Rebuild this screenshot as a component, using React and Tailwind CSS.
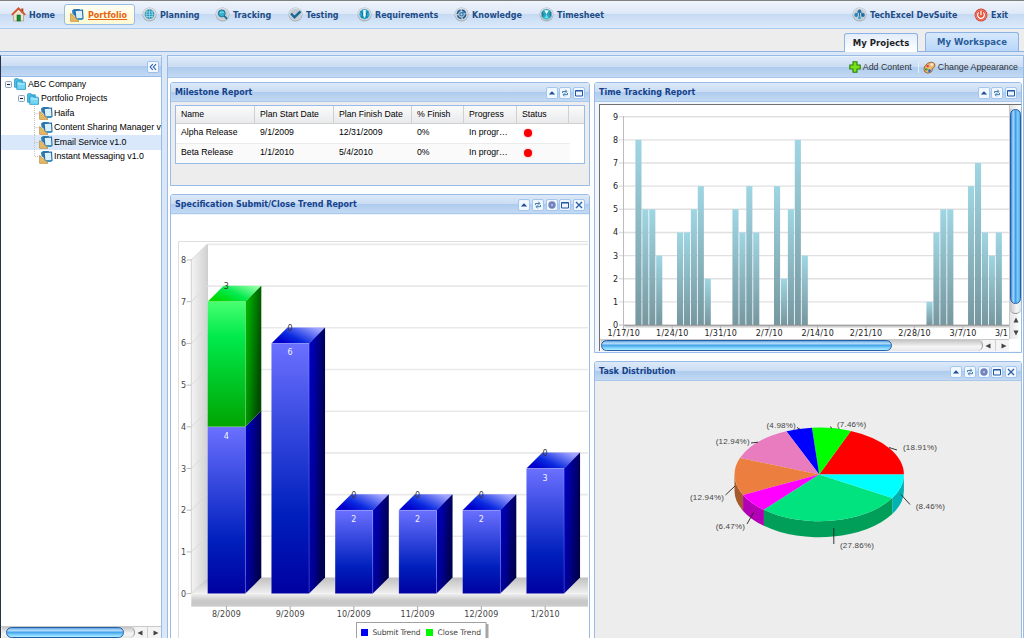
import React from 'react';

const BAR = 'bg-[linear-gradient(to_bottom,#dce9f8_0%,#cbddf3_48%,#adcbee_50%,#c3d9f3_100%)]';

/* ---------- icons ---------- */
function Orb({ children }) {
  return (
    <svg viewBox="0 0 15 15" className="h-[15px] w-[15px] shrink-0">
      <circle cx="7.5" cy="7.5" r="7" fill="#a7afb8" />
      <circle cx="7.5" cy="7" r="6.3" fill="#dfe3e8" />
      <circle cx="7.5" cy="7.3" r="5.5" fill="#c3ccd5" />
      {children}
    </svg>
  );
}

function HomeIcon() {
  return (
    <svg viewBox="0 0 15 15" className="h-[15px] w-[15px] shrink-0">
      <path d="M2.5 7L7.5 2L12.500 7V14H2.500Z" fill="#efe3cf" stroke="#9a8f7a" strokeWidth=".6" />
      <rect x="10.300" y="1.500" width="2" height="4" fill="#a33a22" />
      <path d="M.8 7.800L7.500 1.300L14.200 7.800" fill="none" stroke="#d4542a" strokeWidth="1.800" />
      <rect x="6" y="8" width="3.400" height="6" fill="#118a2c" stroke="#0a5e1d" strokeWidth=".5" />
    </svg>
  );
}

function ProjectIcon() {
  return (
    <svg viewBox="0 0 14 14" className="h-[14px] w-[14px] shrink-0">
      <path d="M2 2.500L4 1H10L9 4L5 8L2.500 6Z" fill="#2d7fb4" />
      <path d="M5 2.500L12.500 2L13 10.500L6 11Z" fill="#d9f1fc" stroke="#2467a0" strokeWidth="1.100" />
      <path d="M7 11L13 10.500L12.500 12H8Z" fill="#2f9ccc" />
      <path d="M.7 5.500L9 13.300H.7Z" fill="#eec26b" stroke="#b98530" strokeWidth=".8" />
      <path d="M2.500 9.500L4.600 11.500H2.500Z" fill="#fff3d2" stroke="#b98530" strokeWidth=".4" />
    </svg>
  );
}

function FolderIcon() {
  return (
    <svg viewBox="0 0 13 13" className="h-[12px] w-[12px] shrink-0">
      <path d="M.6 1.500Q.6.700 1.500.700H4.500L5.500 2H9V10H.6Z" fill="#54bfe4" stroke="#1b8fbd" strokeWidth=".8" />
      <path d="M3 4.200Q3 3.300 4 3.300H6.500L7.500 4.500H11.500Q12.400 4.500 12.400 5.400V12.300H3Z" fill="#76d6f3" stroke="#1b94c4" strokeWidth=".9" />
      <path d="M4 6.500H11.500" stroke="#c9f2fd" />
    </svg>
  );
}

function PlanningIcon() {
  return (
    <Orb>
      <circle cx="7.5" cy="7.3" r="4.700" fill="#1f93b5" />
      <path d="M3 7.300H12M7.500 3V11.600M5.200 3.600Q4 7.300 5.200 11M9.800 3.600Q11 7.300 9.800 11M4 5H11M4 9.500H11" fill="none" stroke="#bcebf5" strokeWidth=".6" />
    </Orb>
  );
}
function TrackingIcon() {
  return (
    <Orb>
      <circle cx="6.800" cy="6.400" r="3.400" fill="#35b3d1" stroke="#13789c" strokeWidth="1" />
      <path d="M9.300 9L12 11.800" stroke="#13688c" strokeWidth="1.800" />
      <path d="M5 6Q6.500 4 8.500 5.500" stroke="#b9ecf6" fill="none" strokeWidth=".8" />
    </Orb>
  );
}
function TestingIcon() {
  return (
    <Orb>
      <path d="M3 6.500L6.500 10.200L12.500 4.300" fill="none" stroke="#176a93" strokeWidth="2.400" />
    </Orb>
  );
}
function RequirementsIcon() {
  return (
    <Orb>
      <circle cx="7.500" cy="7.300" r="5" fill="#27a5cc" />
      <path d="M3.500 4.500Q7.500 6 4.700 10.800M11.500 4.500Q7.500 6 10.300 10.800" fill="none" stroke="#0e6a96" strokeWidth="1" />
      <path d="M6.300 3H8.700V8.500L7.500 11L6.300 8.500Z" fill="#f2fbfd" />
    </Orb>
  );
}
function KnowledgeIcon() {
  return (
    <Orb>
      <circle cx="7.500" cy="7.300" r="4.100" fill="none" stroke="#1c5f97" strokeWidth="1.500" strokeDasharray="5 1.400" />
      <circle cx="7.500" cy="7.300" r="1.700" fill="none" stroke="#2a7db5" strokeWidth="1.200" />
      <path d="M8.500 6L11 4" stroke="#1c5f97" />
    </Orb>
  );
}
function TimesheetIcon() {
  return (
    <Orb>
      <circle cx="7.500" cy="7.300" r="5.200" fill="#2ba3bd" />
      <path d="M5.200 3.200H9.800L7.500 7.200Z" fill="#eefafb" />
      <path d="M5 11.600H10L7.500 7.200Z" fill="#58e0ef" />
      <path d="M3 5Q5 7.300 3 9.600M12 5Q10 7.300 12 9.600" fill="none" stroke="#12637f" strokeWidth=".8" />
    </Orb>
  );
}
function SuiteIcon() {
  return (
    <Orb>
      <path d="M7.500 3.500L4.200 8M7.500 3.500L11 8M7.500 4V11" stroke="#2071a3" strokeWidth="1" />
      <circle cx="7.500" cy="4.200" r="1.700" fill="#1d6fa3" />
      <circle cx="4.200" cy="8" r="1.900" fill="#2a86bb" />
      <circle cx="10.900" cy="8" r="1.900" fill="#1d6fa3" />
      <circle cx="7.500" cy="10.700" r="1.500" fill="#39a9d3" />
    </Orb>
  );
}
function ExitIcon() {
  return (
    <svg viewBox="0 0 15 15" className="h-[14px] w-[14px] shrink-0">
      <circle cx="7.500" cy="7.500" r="6.900" fill="#d43a24" />
      <circle cx="7.500" cy="7.500" r="5.600" fill="#e2503a" stroke="#f6b3a8" strokeWidth=".6" />
      <path d="M5.200 4.700A3.600 3.600 0 1 0 9.800 4.700M7.500 3V7.800" fill="none" stroke="#fff" strokeWidth="1.300" />
    </svg>
  );
}
function PlusIcon() {
  return (
    <svg viewBox="0 0 12 12" className="h-[12px] w-[12px] shrink-0">
      <path d="M4 .8H8V4H11.200V8H8V11.200H4V8H.8V4H4Z" fill="#7be21a" stroke="#2a7d0b" strokeWidth="1.100" />
    </svg>
  );
}
function PaletteIcon() {
  return (
    <svg viewBox="0 0 14 14" className="h-[13px] w-[13px] shrink-0">
      <path d="M1 9Q1 5 5 2.500Q10 0 12.500 3Q14 6 11 7.500Q9.500 8.500 10 10Q9 13 5 13Q1 12.500 1 9Z" fill="#e9b577" stroke="#8f5223" strokeWidth=".9" />
      <circle cx="9.500" cy="4" r="1.600" fill="#f8e6c9" />
      <circle cx="5" cy="5.500" r="1.300" fill="#e3372a" />
      <circle cx="3.500" cy="9" r="1.300" fill="#3c9a2e" />
      <circle cx="7" cy="10.500" r="1.500" fill="#2a6fd0" />
      <circle cx="7.500" cy="7.500" r=".9" fill="#f6d533" />
    </svg>
  );
}

const toolShapes = {
  up: <path d="M2.800 7.500L6 4.200L9.200 7.500Z" fill="#1d4e98" />,
  refresh: (
    <path d="M3.500 6V4.500H7.200M6.300 2.700L8 4.500L6.300 6M8.500 6V7.700H4.800M5.700 6.200L4 7.700L5.700 9.400" fill="none" stroke="#3f7cab" strokeWidth="1" />
  ),
  gear: (
    <>
      <circle cx="6" cy="6" r="3.700" fill="#7283bd" />
      <circle cx="6" cy="6" r="1.900" fill="#a9b4da" stroke="#56649f" strokeWidth=".6" />
    </>
  ),
  max: (
    <path d="M2.500 3.500H9.500V9H2.500ZM2.500 4H9.500" fill="#eef5fd" stroke="#1f57a4" strokeWidth="1" />
  ),
  close: <path d="M3 3L9 9M9 3L3 9" stroke="#2a5da4" strokeWidth="1.300" />,
};

function Tool({ kind }) {
  return (
    <span className="flex h-[12px] w-[12px] items-center justify-center rounded-[2px] border border-[#a4c5ec] bg-[#f1f7fe]">
      <svg viewBox="0 0 12 12" className="h-[12px] w-[12px] shrink-0">{toolShapes[kind]}</svg>
    </span>
  );
}

/* ---------- header ---------- */
const navText = "font-['DejaVu_Sans',Verdana,sans-serif] text-[8px] font-bold whitespace-nowrap";

function NavItem({ icon, label, width }) {
  return (
    <a className={`flex h-full shrink-0 items-center gap-[3px] text-[#1d4c86] ${navText} ${width}`}>
      {icon}
      <span className="pt-[2px]">{label}</span>
    </a>
  );
}

function TopNav() {
  return (
    <header className="flex h-[29px] items-center border-t border-b border-t-[#808080] border-b-[#a9cbf0] bg-[linear-gradient(to_bottom,#eff4fc_0%,#dde8f7_47%,#c6daf3_50%,#dcebfb_100%)] pl-[11px]">
      <NavItem icon={<HomeIcon />} label="Home" width="w-[53px]" />
      <a className={`mr-[7px] flex h-[21px] w-[71px] shrink-0 items-center gap-[4px] rounded-[3px] border border-[#97bce6] bg-[linear-gradient(to_bottom,#fffef4,#fff9d3)] pl-[5px] text-[#e5640f] ${navText}`}>
        <ProjectIcon />
        <span className="pt-[2px] underline">Portfolio</span>
      </a>
      <NavItem icon={<PlanningIcon />} label="Planning" width="w-[73px]" />
      <NavItem icon={<TrackingIcon />} label="Tracking" width="w-[73px]" />
      <NavItem icon={<TestingIcon />} label="Testing" width="w-[69px]" />
      <NavItem icon={<RequirementsIcon />} label="Requirements" width="w-[97px]" />
      <NavItem icon={<KnowledgeIcon />} label="Knowledge" width="w-[85px]" />
      <NavItem icon={<TimesheetIcon />} label="Timesheet" width="w-[72px]" />
      <div className="flex-1" />
      <NavItem icon={<SuiteIcon />} label="TechExcel DevSuite" width="w-[122px]" />
      <NavItem icon={<ExitIcon />} label="Exit" width="w-[50px]" />
    </header>
  );
}

function TabStrip() {
  const tab = "flex h-[19px] items-center justify-center rounded-t-[3px] border border-b-0 border-[#8db2e3] font-['DejaVu_Sans',Verdana,sans-serif] text-[8.5px] font-bold tracking-[0.05px] whitespace-nowrap";
  return (
    <div className="flex h-[23px] items-end justify-end gap-[7px] border-b border-[#8fb4e2] bg-[#ededed] pr-[5px]">
      <div className={`-mb-px w-[74px] bg-[linear-gradient(to_bottom,#e3edfa,#ffffff)] text-[#222] ${tab}`}>My Projects</div>
      <div className={`w-[94px] bg-[linear-gradient(to_bottom,#d6e8fc,#b9d6fa)] text-[#2b5c99] ${tab}`}>My Workspace</div>
    </div>
  );
}

/* ---------- scrollbars ---------- */
function HScroll({ thumb, arrows }) {
  return (
    <div className="flex h-[12px] items-center border-t border-[#c9c9c9] bg-[linear-gradient(to_bottom,#e4e4e4,#ffffff)] pl-[1px]">
      <div className="flex h-[11px] flex-1 rounded-r-full border-r border-[#9a9a9a] bg-[linear-gradient(to_bottom,#c4c4c4,#f5f5f5_60%,#e6e6e6)]">
        <div className={`h-[11px] rounded-full border border-[#2560a8] bg-[linear-gradient(to_bottom,#5e9fe0_0%,#b9dffa_25%,#4aa6ec_50%,#7ed0fc_75%,#b0f0ff_100%)] ${thumb}`} />
      </div>
      <div className={`flex h-full items-center justify-around bg-[#f4f4f4] ${arrows}`}>
        <svg viewBox="0 0 6 6" className="h-[6px] w-[6px]"><path d="M5.500.500V5.500L.5 3Z" fill="#444" /></svg>
        <span className="h-full w-px bg-[#d0d0d0]" />
        <svg viewBox="0 0 6 6" className="h-[6px] w-[6px]"><path d="M.5.500V5.500L5.500 3Z" fill="#444" /></svg>
      </div>
    </div>
  );
}

function VScroll() {
  return (
    <div className="flex w-[12px] flex-col items-center border-l border-[#c9c9c9] bg-[linear-gradient(to_right,#e4e4e4,#ffffff)] pt-[4px]">
      <div className="h-[205px] w-[11px] shrink-0 rounded-b-full border-b border-[#9a9a9a] bg-[linear-gradient(to_right,#c4c4c4,#f5f5f5_60%,#e6e6e6)]">
        <div className="h-[195px] w-[11px] rounded-full border border-[#2560a8] bg-[linear-gradient(to_right,#3e86d6_0%,#a9d9fa_25%,#3f9fe8_50%,#7ed0fc_75%,#5aa9e6_100%)]" />
      </div>
      <svg viewBox="0 0 6 6" className="mt-[3px] h-[6px] w-[6px] shrink-0"><path d="M.5 5.500H5.500L3 .5Z" fill="#444" /></svg>
      <svg viewBox="0 0 6 6" className="mt-[7px] h-[6px] w-[6px] shrink-0"><path d="M.5.500H5.500L3 5.500Z" fill="#444" /></svg>
    </div>
  );
}

/* ---------- tree ---------- */
function Toggle() {
  return (
    <svg viewBox="0 0 7 7" className="h-[7px] w-[7px] shrink-0">
      <rect x=".5" y=".5" width="6" height="6" rx="1" fill="#f2f5f9" stroke="#8ba2b8" />
      <path d="M2 3.500H5" stroke="#222" />
    </svg>
  );
}

const treeRow = "flex h-[14.5px] shrink-0 items-center overflow-hidden font-['Liberation_Sans',Arial,sans-serif] text-[8.8px] whitespace-nowrap text-black";

function Sidebar() {
  const leaves = ['Haifa', 'Content Sharing Manager v', 'Email Service v1.0', 'Instant Messaging v1.0'];
  return (
    <aside className="flex w-[162px] shrink-0 flex-col border-t border-l border-t-[#99bbe8] border-l-[#26324a] bg-white">
      <div className={`flex h-[21px] shrink-0 items-center justify-end border-t border-r border-b border-t-[#eaf2fb] border-r-[#99bbe8] border-b-[#99bbe8] pr-[2px] ${BAR}`}>
        <span className="flex h-[12px] w-[12px] items-center justify-center rounded-[2px] border border-[#9cc0ea] bg-[#f3f8fe]">
          <svg viewBox="0 0 8 8" className="h-[8px] w-[8px]"><path d="M3.800 1.200L1.200 4L3.800 6.800M7 1.200L4.400 4L7 6.800" fill="none" stroke="#2a62ac" strokeWidth="1.100" /></svg>
        </span>
      </div>
      <div className="flex flex-1 flex-col border-r border-[#99bbe8]">
        <div className={`${treeRow} gap-[2px] pl-[4px]`}><Toggle /><FolderIcon /><span>ABC Company</span></div>
        <div className={`${treeRow} gap-[2px] pl-[17px]`}><Toggle /><FolderIcon /><span>Portfolio Projects</span></div>
        {leaves.map((name, i) => (
          <div key={name} className={`${treeRow} pl-[33px] ${i === 2 ? 'bg-[#d9e8fb]' : ''}`}>
            <svg viewBox="0 0 5 15" className="h-[15px] w-[5px] shrink-0">
              <path d={i === 3 ? 'M.5 0V7.500H5' : 'M.5 0V15M.5 7.500H5'} fill="none" stroke="#c4c4c4" strokeDasharray="1 1" />
            </svg>
            <ProjectIcon />
            <span className="ml-[1px] tracking-[-0.03px]">{name}</span>
          </div>
        ))}
        <div className="flex-1" />
        <HScroll thumb="ml-[4px] w-[118px]" arrows="w-[26px]" />
      </div>
    </aside>
  );
}

/* ---------- portlets ---------- */
function Portlet({ title, tools, className, children }) {
  return (
    <section className={`flex flex-col overflow-hidden rounded-t-[3px] border border-[#99bbe8] ${className}`}>
      <div className={`flex h-[19px] shrink-0 items-center justify-between border-b border-[#a9c8ee] pt-px pr-[4px] pl-[4px] ${BAR}`}>
        <h2 className="font-['DejaVu_Sans',Verdana,sans-serif] text-[8px] font-bold whitespace-nowrap text-[#15428b]">{title}</h2>
        <div className="flex gap-[1.7px]">{tools.map((t) => <Tool key={t} kind={t} />)}</div>
      </div>
      {children}
    </section>
  );
}

function Milestones() {
  const cols = 'grid grid-cols-[79px_79px_78px_52px_53px_52px_1fr]';
  const rows = [
    ['Alpha Release', '9/1/2009', '12/31/2009'],
    ['Beta Release', '1/1/2010', '5/4/2010'],
  ];
  return (
    <div className="flex-1 bg-[#ededed] px-[4px] pt-[3px]">
      <div className="h-[59px] border border-[#99bbe8] bg-white font-['Liberation_Sans',Arial,sans-serif] text-[8.7px] text-black">
        <div className={`${cols} h-[18px] border-b border-[#d0d0d0] bg-[linear-gradient(to_bottom,#fbfbfb,#e9eaec)]`}>
          {['Name', 'Plan Start Date', 'Plan Finish Date', '% Finish', 'Progress', 'Status', ''].map((h) => (
            <div key={h} className="flex items-center border-r border-[#d0d0d0] pl-[5px] whitespace-nowrap last:border-r-0">{h}</div>
          ))}
        </div>
        {rows.map((r, i) => (
          <div key={r[0]} className={`${cols} mr-[14px] h-[19.5px] ${i ? 'bg-[#fafafa]' : 'border-b border-[#ededed]'}`}>
            {[...r, '0%', 'In progr…'].map((c) => (
              <div key={c} className="flex items-center pb-[2px] pl-[5px] whitespace-nowrap">{c}</div>
            ))}
            <div className="flex items-center pl-[7px]">
              <span className="h-[8px] w-[8px] rounded-full bg-[#f80000] shadow-[0_0_2px_#ff8080]" />
            </div>
          </div>
        ))}
      </div>
    </div>
  );
}

/* Stacked 3-D columns: 41.7px per unit, 16px of depth. */
const trend = [
  ['8/2009', 4, 3], ['9/2009', 6, 0], ['10/2009', 2, 0],
  ['11/2009', 2, 0], ['12/2009', 2, 0], ['1/2010', 3, 0],
];

function Box({ x, y, h, front, side }) {
  return (
    <>
      <path d={`M${x + 37.7} ${y}l16 -16v${h}l-16 16z`} fill={`url(#${side})`} />
      <rect x={x} y={y} width="37.7" height={h} fill={`url(#${front})`} stroke="#ffffff" strokeOpacity=".25" strokeWidth=".7" />
    </>
  );
}

function TrendChart() {
  const yOf = (v) => 593.6 - 41.7 * v;
  return (
    <svg viewBox="171 214 418 424" className="h-[424px] w-[418px] shrink-0 bg-white font-['DejaVu_Sans',Verdana,sans-serif] text-[8px]">
      <defs>
        <linearGradient id="blueFront" x1="0" x2="0" y1="0" y2="1"><stop offset="0" stopColor="#6b70ff" /><stop offset=".68" stopColor="#0020bd" /><stop offset="1" stopColor="#0000a0" /></linearGradient>
        <linearGradient id="blueSide" x1="0" x2="1" y1="0" y2=".3"><stop offset="0" stopColor="#0000d0" /><stop offset="1" stopColor="#000050" /></linearGradient>
        <linearGradient id="blueTop" x1=".08" x2=".92" y1=".7" y2=".2"><stop offset="0" stopColor="#0000cc" /><stop offset=".35" stopColor="#0b2be0" /><stop offset="1" stopColor="#a0a4ff" /></linearGradient>
        <linearGradient id="greenFront" x1="0" x2="0" y1="0" y2="1"><stop offset="0" stopColor="#48ff70" /><stop offset=".28" stopColor="#00ea4c" /><stop offset="1" stopColor="#00a400" /></linearGradient>
        <linearGradient id="greenSide" x1="0" x2="1" y1="0" y2=".4"><stop offset="0" stopColor="#00c400" /><stop offset="1" stopColor="#004c00" /></linearGradient>
        <linearGradient id="greenTop" x1=".05" x2=".95" y1=".7" y2=".1"><stop offset="0" stopColor="#00d800" /><stop offset=".45" stopColor="#00ea4c" /><stop offset="1" stopColor="#98ffa8" /></linearGradient>
        <linearGradient id="wall"><stop offset="0" stopColor="#f4f4f4" /><stop offset="1" stopColor="#d2d2d2" /></linearGradient>
        <linearGradient id="floor" x1="0" x2="0" y1="0" y2="1"><stop offset="0" stopColor="#c0c0c0" /><stop offset="1" stopColor="#f0f0f0" /></linearGradient>
        <linearGradient id="slab" x1="0" x2="0" y1="0" y2="1"><stop offset="0" stopColor="#f0f0f0" /><stop offset=".6" stopColor="#c8c8c8" /><stop offset="1" stopColor="#c8c8c8" /></linearGradient>
      </defs>
      <path d="M171 214.500H589" stroke="#edf3fa" />
      <path d="M178.500 638V241.500H588" fill="none" stroke="#dedede" />
      <path d="M191.300 260l16 -16V577.600l-16 16z" fill="url(#wall)" />
      <path d="M191.300 593.600l16 -16H588V593.600z" fill="url(#floor)" />
      <rect x="191.300" y="593.600" width="396.700" height="12" fill="url(#slab)" />
      <path d="M191.300 606H588" stroke="#bbb" />
      <path d="M191.300 259V593M207.500 244V577" stroke="#cfcfcf" />
      {[0, 1, 2, 3, 4, 5, 6, 7, 8].map((v) => (
        <g key={v}>
          {v > 0 && <path d={`M207.500 ${yOf(v) - 15.6}H588`} stroke="#e9e9e9" strokeWidth="1.600" />}
          <path d={`M191.300 ${yOf(v)}l16 -16`} stroke="#dadada" />
          <path d={`M186.500 ${yOf(v)}h4.800`} stroke="#bdbdbd" />
          <text x="186" y={yOf(v) + 3} textAnchor="end" fill="#444">{v}</text>
        </g>
      ))}
      {trend.map(([label, a, b], i) => {
        const x = 207.6 + 63.75 * i;
        const top = yOf(a + b);
        return (
          <g key={label}>
            <path d={`M${x} ${top}l16 -16h37.700l-16 16z`} fill={b ? 'url(#greenTop)' : 'url(#blueTop)'} />
            <Box x={x} y={yOf(a)} h={41.7 * a} front="blueFront" side="blueSide" />
            {b > 0 && <Box x={x} y={top} h={41.7 * b} front="greenFront" side="greenSide" />}
            <text x={x + 18.8} y={top - 12.500} textAnchor="middle" fill="#333">{b}</text>
            <text x={x + 18.8} y={yOf(a) + 12} textAnchor="middle" fill="#f4f4ff">{a}</text>
            <path d={`M${x + 18.8} 606v4`} stroke="#aaa" />
            <text x={x + 18.8} y="617" textAnchor="middle" letterSpacing=".15" fill="#444">{label}</text>
          </g>
        );
      })}
      <rect x="358" y="624" width="130.500" height="18" fill="#a8a8a8" />
      <rect x="356.500" y="622.500" width="129.500" height="20" fill="#fff" stroke="#a0a0a0" />
      <rect x="361" y="629" width="7" height="7" fill="#0000f5" />
      <text x="372.500" y="635" fontSize="7.600" textLength="48" fill="#444">Submit Trend</text>
      <rect x="426" y="629" width="7" height="7" fill="#00f800" />
      <text x="437.500" y="635" fontSize="7.600" textLength="43.500" fill="#444">Close Trend</text>
    </svg>
  );
}

const hours = [
  [0, [8, 5, 5, 3]], [6, [4, 4, 5, 6, 2]], [14, [5, 4, 6, 4]],
  [20, [6, 2, 5, 8, 3]], [42, [1, 4, 5, 5]], [48, [6, 7, 4, 3, 4]],
];

function TimeChart() {
  const yOf = (v) => 325 - 23.14 * v;
  return (
    <svg viewBox="600 105 409 234" className="h-[234px] w-[409px] shrink-0 bg-white font-['DejaVu_Sans',Verdana,sans-serif] text-[8px]">
      <defs>
        <linearGradient id="hour" x1="0" x2="0" y1="0" y2="1"><stop offset="0" stopColor="#9fd6e3" /><stop offset="1" stopColor="#76979f" /></linearGradient>
        <linearGradient id="axisShade" x1="0" x2="0" y1="0" y2="1"><stop offset="0" stopColor="#b5b5b5" /><stop offset="1" stopColor="#ffffff" /></linearGradient>
      </defs>
      {[0, 1, 2, 3, 4, 5, 6, 7, 8, 9].map((v) => (
        <g key={v}>
          {v > 0 && <path d={`M619 ${yOf(v)}H1009`} stroke="#e0e0e0" strokeWidth="1.400" />}
          <text x="618" y={yOf(v) + 3} textAnchor="end" fill="#222">{v}</text>
        </g>
      ))}
      <path d="M619 325H624M623.500 116V328" stroke="#bcbcbc" />
      <rect x="625" y="325.500" width="384" height="3" fill="url(#axisShade)" />
      {hours.map(([start, vals]) => vals.map((v, i) => (
        <rect key={start + i} x={635.4 + 6.93 * (start + i)} y={yOf(v)} width="6.100" height={23.14 * v} fill="url(#hour)" />
      )))}
      <path d="M624 325.200H1009" stroke="#8b8b8b" />
      {['1/17/10', '1/24/10', '1/31/10', '2/7/10', '2/14/10', '2/21/10', '2/28/10', '3/7/10'].map((d, i) => (
        <g key={d}>
          <path d={`M${623.7 + 48.45 * i} 326v4`} stroke="#b5b5b5" />
          <text x={623.9 + 48.45 * i} y="336.200" textAnchor="middle" letterSpacing=".25" fill="#222">{d}</text>
        </g>
      ))}
      <text x="995" y="336.200" fill="#222">3/1</text>
    </svg>
  );
}

const slices = [
  [18.91, '#ff0000', '#b00000'], [7.46, '#00ff00', '#00b000'], [4.98, '#0000ff', '#0000b0'],
  [12.94, '#e87cbf', '#a05084'], [12.94, '#ec7f40', '#a6592c'], [6.47, '#ff00ff', '#b400b4'],
  [27.86, '#00e37f', '#009f59'], [8.46, '#00ffff', '#00b2b2'],
];
const callouts = [
  ['(7.46%)', 837, 427, 'M830 426.500l2 1.800'],
  ['(4.98%)', 766.500, 428, 'M797 427.500l3 1.800'],
  ['(12.94%)', 715.700, 443.500, 'M751 443l7 -.8'],
  ['(18.91%)', 903, 450, 'M889 447.500l8 2.500'],
  ['(12.94%)', 690, 499.700, 'M725.500 495l9.500 -9'],
  ['(8.46%)', 915.700, 509.300, 'M901 494.500l9 10'],
  ['(6.47%)', 715.700, 528.500, 'M747 524l6.500 -11.500'],
  ['(27.86%)', 840, 548, 'M833.800 528v16'],
];

function PieChart() {
  const cx = 819.2, cy = 474.4, rx = 84.7, ry = 46.8;
  const pt = (t) => `${(cx + rx * Math.cos(t)).toFixed(2)} ${(cy - ry * Math.sin(t)).toFixed(2)}`;
  const low = (t) => `${(cx + rx * Math.cos(t)).toFixed(2)} ${(cy + 16 - ry * Math.sin(t)).toFixed(2)}`;
  let acc = 0;
  const parts = slices.map(([p, fill, dark]) => {
    const a = (acc / 100.02) * 2 * Math.PI;
    acc += p;
    return { a, b: (acc / 100.02) * 2 * Math.PI, fill, dark };
  });
  return (
    <svg viewBox="595 381 427 257" className="h-[257px] w-[427px] shrink-0 bg-[#ededed] font-['Liberation_Sans',Arial,sans-serif] text-[8px] tracking-[0.2px]">
      {parts.filter((s) => s.b > Math.PI).map((s) => {
        const a = Math.max(s.a, Math.PI);
        return <path key={s.fill} d={`M${pt(a)}A${rx} ${ry} 0 0 0 ${pt(s.b)}L${low(s.b)}A${rx} ${ry} 0 0 1 ${low(a)}Z`} fill={s.dark} />;
      })}
      {parts.map((s) => (
        <path key={s.fill} d={`M${cx} ${cy}L${pt(s.a)}A${rx} ${ry} 0 0 0 ${pt(s.b)}Z`} fill={s.fill} />
      ))}
      {callouts.map(([t, x, y, d]) => (
        <g key={d}>
          <path d={d} stroke="#222" strokeWidth=".9" fill="none" />
          <text x={x} y={y} fill="#444">{t}</text>
        </g>
      ))}
    </svg>
  );
}

export default function App() {
  return (
    <div className="flex h-[638px] w-[1024px] flex-col overflow-hidden bg-white">
      <TopNav />
      <TabStrip />
      <div className="flex min-h-0 flex-1 bg-[#dbe7f7] pt-[3px]">
        <Sidebar />
        <main className="ml-[5px] flex flex-1 flex-col border border-b-0 border-[#99bbe8] bg-white">
          <div className={`flex h-[22px] shrink-0 items-center justify-end border-t border-b border-t-[#eaf2fb] border-b-[#a9c8ee] pr-[5px] font-['Liberation_Sans',Arial,sans-serif] text-[8.8px] whitespace-nowrap text-[#333] ${BAR}`}>
            <PlusIcon />
            <span className="ml-[2px] pt-[2px]">Add Content</span>
            <span className="mr-[4px] ml-[6px] h-[11px] w-px bg-[#e6f0fb]" />
            <PaletteIcon />
            <span className="ml-[2px] pt-[2px]">Change Appearance</span>
          </div>
          <div className="flex min-h-0 flex-1 gap-[4px] pt-[4px] pl-[2px]">
            <div className="flex w-[420px] flex-col gap-[8px]">
              <Portlet title="Milestone Report" tools={['up', 'refresh', 'max']} className="h-[104px] shrink-0">
                <Milestones />
              </Portlet>
              <Portlet title="Specification Submit/Close Trend Report" tools={['up', 'refresh', 'gear', 'max', 'close']} className="h-[450px] shrink-0 bg-white">
                <TrendChart />
              </Portlet>
            </div>
            <div className="flex w-[428px] flex-col gap-[8px]">
              <Portlet title="Time Tracking Report" tools={['up', 'refresh', 'max']} className="h-[271px] shrink-0">
                <div className="flex-1 bg-[#f3f6fa] pt-[2px] pl-[4px]">
                  <div className="h-[247px] w-[422px] border-t border-l border-[#707070] bg-white">
                    <div className="flex h-[234px] overflow-hidden">
                      <TimeChart />
                      <VScroll />
                    </div>
                    <div className="w-[409px]"><HScroll thumb="w-[291px]" arrows="w-[26px]" /></div>
                  </div>
                </div>
              </Portlet>
              <Portlet title="Task Distribution" tools={['up', 'refresh', 'gear', 'max', 'close']} className="h-[290px] shrink-0">
                <PieChart />
              </Portlet>
            </div>
          </div>
        </main>
      </div>
    </div>
  );
}
